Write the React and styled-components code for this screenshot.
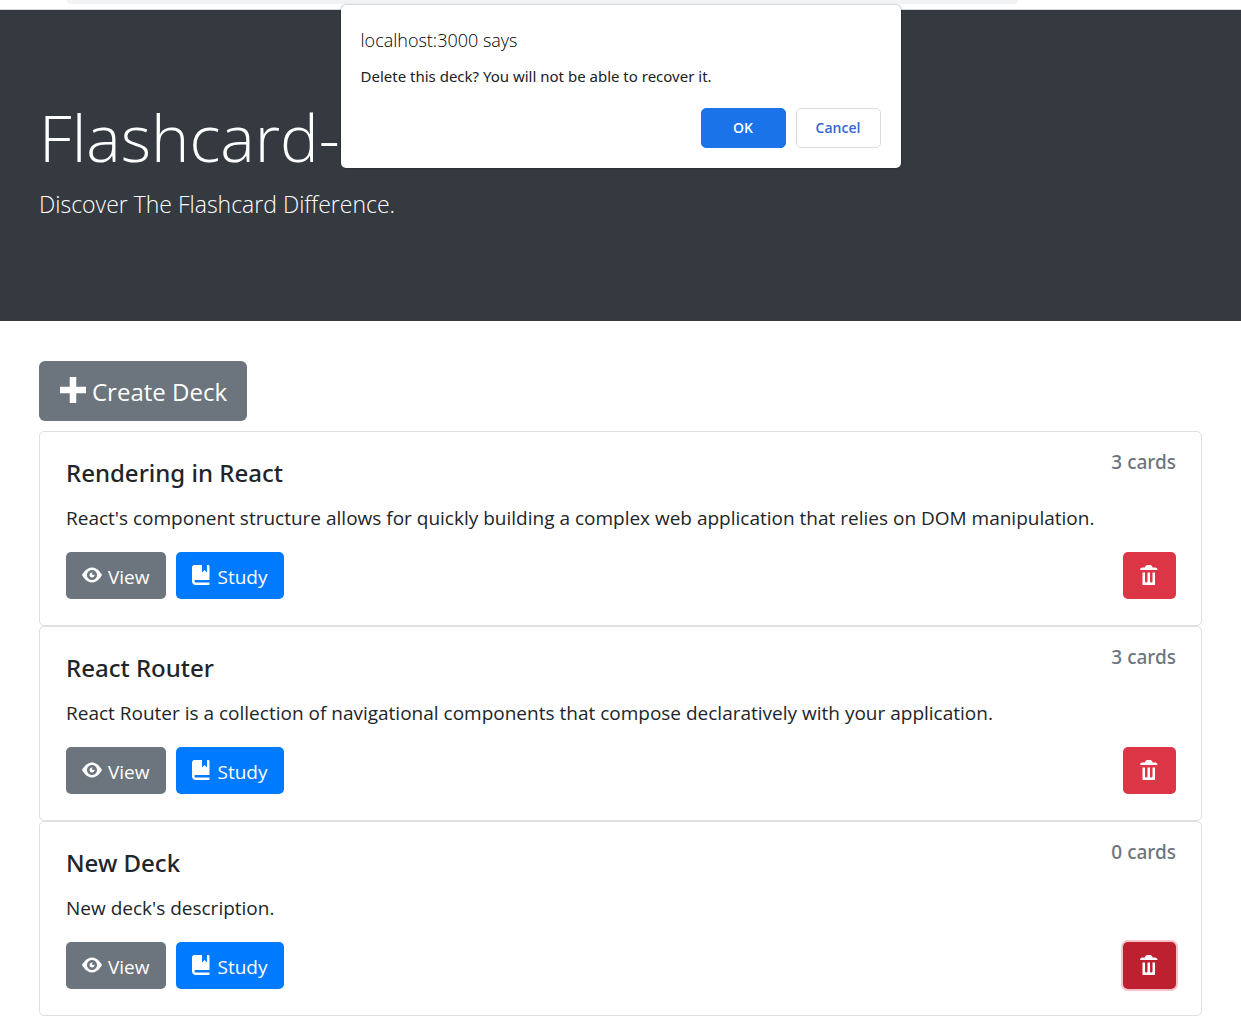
import React from "react";
import styled, { createGlobalStyle, css } from "styled-components";

const GlobalStyle = createGlobalStyle`
  *, *::before, *::after { box-sizing: border-box; }
  body {
    margin: 0;
    background: #fff;
    color: #212529;
    font-family: "Open Sans", "Noto Sans", sans-serif;
    font-size: 19px;
    line-height: 30px;
  }
  h1, h2, h3, p { margin: 0; }
  button { font-family: inherit; cursor: pointer; }
`;

const BrowserBar = styled.div`
  height: 10px;
  padding: 0 223px 0 67px;
  background: #fff;
  border-bottom: 1px solid #d5d9dc;
`;

const AddressField = styled.div`
  height: 4px;
  background: #f1f3f4;
  border-radius: 0 0 8px 8px;
`;

const Header = styled.header`
  padding: 84px 39px 100px;
  background: #343a40;
  color: #fff;
`;

const SiteTitle = styled.h1`
  margin-bottom: 8px;
  font-size: 65px;
  font-weight: 300;
  line-height: 86px;
`;

const Lead = styled.p`
  font-size: 23px;
  font-weight: 300;
  line-height: 33px;
`;

const Main = styled.main`
  padding: 40px 39px 16px;
`;

const tones = {
  secondary: "#6c757d",
  primary: "#007bff",
  danger: "#dc3545",
};

const Button = styled.button`
  display: inline-flex;
  align-items: center;
  justify-content: center;
  gap: 6px;
  min-width: 53px;
  height: 47px;
  padding: 2px 16px 0;
  border: 0;
  border-radius: 5px;
  background: ${(p) => tones[p.$tone]};
  color: #fff;
  font-size: 19px;
  line-height: 30px;

  ${(p) =>
    p.$large &&
    css`
      height: 60px;
      padding: 2px 20px 0 21px;
      border-radius: 6px;
      font-size: 24px;
      line-height: 38px;
    `}

  ${(p) =>
    p.$pressed &&
    css`
      background: #bd2130;
      box-shadow: 0 0 0 2px #f6c1c7;
    `}
`;

const Icon = styled.svg`
  flex: none;
  width: ${(p) => p.$size}px;
  height: ${(p) => p.$size}px;
  margin-bottom: 4px;
  fill: currentColor;
`;

const DeckList = styled.div`
  display: flex;
  flex-direction: column;
  margin-top: 10px;
`;

const Card = styled.article`
  padding: 18px 25px 26px 26px;
  border: 1px solid #dfdfdf;
  border-radius: 5px;
`;

const CardHead = styled.div`
  display: flex;
  align-items: flex-start;
  justify-content: space-between;
  font-family: "Noto Sans", "Open Sans", sans-serif;
`;

const DeckName = styled.h2`
  padding-top: 8px;
  font-size: 24px;
  font-weight: 500;
  line-height: 30px;
`;

const CardCount = styled.h3`
  color: #6c757d;
  font-size: 19px;
  font-weight: 500;
  line-height: 24px;
`;

const Description = styled.p`
  margin: 15px 0 19px;
`;

const Actions = styled.div`
  display: flex;
  gap: 10px;

  & > :last-child { margin-left: auto; }
`;

const Dialog = styled.section`
  position: absolute;
  top: 5px;
  left: 50%;
  width: 560px;
  margin-left: -280px;
  padding: 22px 20px 20px;
  border-radius: 5px;
  background: #fff;
  box-shadow: 0 0 2px rgba(0, 0, 0, 0.5);
  color: #202124;
`;

const DialogTitle = styled.h2`
  color: #000;
  font-size: 18px;
  font-weight: 300;
  line-height: 26px;
`;

const DialogText = styled.p`
  margin: 12px 0 21px;
  font-family: "Noto Sans", "Open Sans", sans-serif;
  font-size: 15px;
  line-height: 22px;
`;

const DialogActions = styled.div`
  display: flex;
  justify-content: flex-end;
  gap: 10px;
`;

const DialogButton = styled.button`
  width: 85px;
  height: 40px;
  padding: 0 0 2px;
  border: 1px solid ${(p) => (p.$filled ? "#1a73e8" : "#dadce0")};
  border-radius: 5px;
  background: ${(p) => (p.$filled ? "#1a73e8" : "#fff")};
  color: ${(p) => (p.$filled ? "#fff" : "#3367d6")};
  font-size: 14px;
  font-weight: 600;
`;

const PlusIcon = () => (
  <Icon $size={26} viewBox="0 0 8 8" aria-hidden="true">
    <path d="M3 0v3h-3v2h3v3h2v-3h3v-2h-3v-3h-2z" />
  </Icon>
);

const EyeIcon = () => (
  <Icon $size={20} viewBox="0 0 8 8" aria-hidden="true">
    <path
      transform="translate(0 1)"
      d="M4.03 0c-2.53 0-4.03 3-4.03 3s1.5 3 4.03 3c2.47 0 3.97-3 3.97-3s-1.5-3-3.97-3zm-.03 1c1.11 0 2 .9 2 2 0 1.11-.89 2-2 2-1.1 0-2-.89-2-2 0-1.1.9-2 2-2zm0 1c-.55 0-1 .45-1 1s.45 1 1 1 1-.45 1-1c0-.1-.04-.19-.06-.28-.08.16-.24.28-.44.28-.28 0-.5-.22-.5-.5 0-.2.12-.36.28-.44-.09-.03-.18-.06-.28-.06z"
    />
  </Icon>
);

const BookIcon = () => (
  <Icon $size={20} viewBox="0 0 8 8" aria-hidden="true">
    <path d="M1 0c-.07 0-.13.01-.19.03-.39.08-.7.39-.78.78-.03.06-.03.12-.03.19v5.5c0 .83.67 1.5 1.5 1.5h5.5v-1h-5.5c-.28 0-.5-.22-.5-.5s.22-.5.5-.5h5.5v-5.5c0-.28-.22-.5-.5-.5h-.5v3l-1-1-1 1v-3h-3z" />
  </Icon>
);

const TrashIcon = () => (
  <Icon $size={20} viewBox="0 0 8 8" aria-hidden="true">
    <path d="M3 0c-.55 0-1 .45-1 1h-1c-.55 0-1 .45-1 1h7c0-.55-.45-1-1-1h-1c0-.55-.45-1-1-1h-1zm-2 3v4.81c0 .11.08.19.19.19h4.63c.11 0 .19-.08.19-.19v-4.81h-1v3.5c0 .28-.22.5-.5.5s-.5-.22-.5-.5v-3.5h-1v3.5c0 .28-.22.5-.5.5s-.5-.22-.5-.5v-3.5h-1z" />
  </Icon>
);

const decks = [
  {
    name: "Rendering in React",
    description:
      "React's component structure allows for quickly building a complex web application that relies on DOM manipulation.",
    cards: 3,
  },
  {
    name: "React Router",
    description:
      "React Router is a collection of navigational components that compose declaratively with your application.",
    cards: 3,
  },
  { name: "New Deck", description: "New deck's description.", cards: 0, deleting: true },
];

function Deck({ deck }) {
  return (
    <Card>
      <CardHead>
        <DeckName>{deck.name}</DeckName>
        <CardCount>{deck.cards} cards</CardCount>
      </CardHead>
      <Description>{deck.description}</Description>
      <Actions>
        <Button type="button" $tone="secondary">
          <EyeIcon />
          View
        </Button>
        <Button type="button" $tone="primary">
          <BookIcon />
          Study
        </Button>
        <Button type="button" $tone="danger" $pressed={deck.deleting} aria-label="Delete">
          <TrashIcon />
        </Button>
      </Actions>
    </Card>
  );
}

export default function App() {
  return (
    <>
      <GlobalStyle />
      <BrowserBar>
        <AddressField />
      </BrowserBar>
      <Header>
        <SiteTitle>Flashcard-</SiteTitle>
        <Lead>Discover The Flashcard Difference.</Lead>
      </Header>
      <Main>
        <Button type="button" $tone="secondary" $large>
          <PlusIcon />
          Create Deck
        </Button>
        <DeckList>
          {decks.map((deck) => (
            <Deck key={deck.name} deck={deck} />
          ))}
        </DeckList>
      </Main>
      <Dialog role="alertdialog" aria-labelledby="dialog-title" aria-describedby="dialog-text">
        <DialogTitle id="dialog-title">localhost:3000 says</DialogTitle>
        <DialogText id="dialog-text">
          Delete this deck? You will not be able to recover it.
        </DialogText>
        <DialogActions>
          <DialogButton type="button" $filled>
            OK
          </DialogButton>
          <DialogButton type="button">Cancel</DialogButton>
        </DialogActions>
      </Dialog>
    </>
  );
}
